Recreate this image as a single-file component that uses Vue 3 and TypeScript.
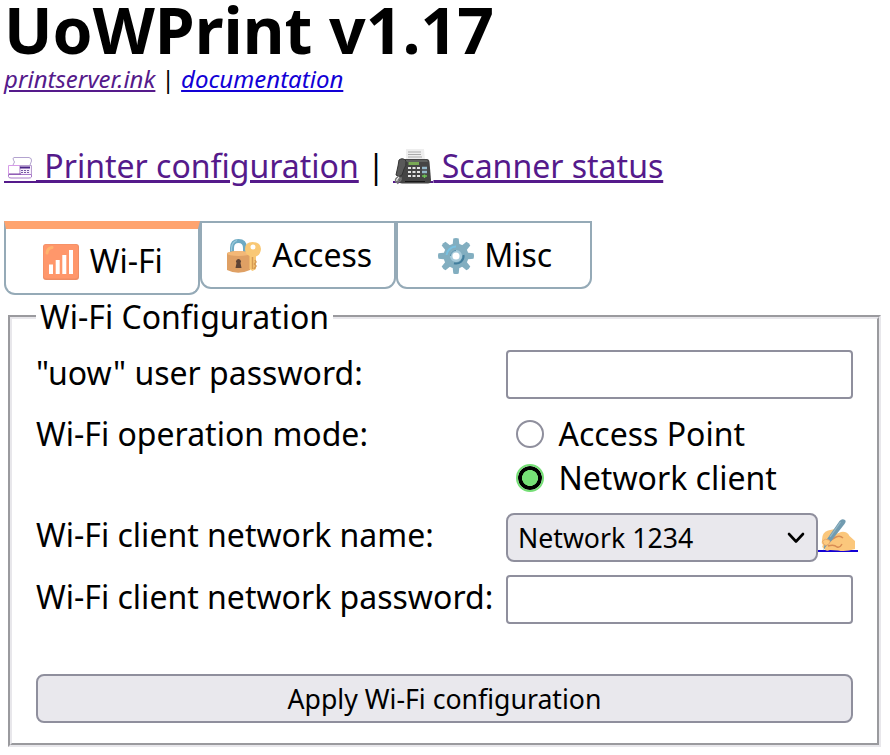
<script setup lang="ts">
import { ref } from 'vue'

type Mode = 'ap' | 'client'

const tabs = ['Wi-Fi', 'Access', 'Misc']
const activeTab = ref(0)
const userPassword = ref('')
const networkPassword = ref('')
const network = ref('Network 1234')
const mode = ref<Mode>('client')
const modes: { id: Mode; label: string }[] = [
  { id: 'ap', label: 'Access Point' },
  { id: 'client', label: 'Network client' },
]
</script>

<template>
  <main class="page">
    <h1>UoWPrint v1.17</h1>
    <div class="sub"><a class="visited" href="#"><i>printserver.ink</i></a> | <a href="#"><i>documentation</i></a></div>

    <nav class="links">
      <a class="visited" href="#"><svg class="emoji printer" viewBox="0 0 32 36">
        <rect x="0" y="33" width="32" height="2" fill="#551a8b" />
        <path d="M9 17 L10.500 14 Q8 10 10 9.500 H25 Q28 10 27.500 13 L26 17" fill="#fff" stroke="#b3a3cf" stroke-width="1" />
        <path d="M4.500 17.500 H16 V26.500 H4.500Z" fill="#fff" stroke="#d79be8" />
        <path d="M16 17.500 H27.500 V26.500 H16Z" fill="#f7edfc" stroke="#b9a0d0" />
        <path d="M4.500 26.500 H27.500 V29 Q27 30 25 30 H7 Q4.500 30 4.500 28.500Z" fill="#fff" stroke="#a878c8" />
        <path d="M5 26 H17" stroke="#7d45a5" />
        <path d="M16 19.500 H26" stroke="#4a2387" stroke-width="2" />
        <path d="M17 22.500 H26 M17 24.500 H26" stroke="#765ca3" stroke-dasharray="2 1" />
      </svg>&nbsp;Printer configuration</a><span class="bar">|</span><a class="visited" href="#"><svg class="emoji" viewBox="0 0 40 36">
        <rect x="0" y="33" width="40" height="2" fill="#551a8b" />
        <path d="M13 1 H31 L32 13 H13Z" fill="#eee" />
        <path d="M15 4 H28 M15 6.500 H28 M15 9 H29" stroke="#aaa" />
        <path d="M12 11 H34 Q36 11 36.500 14 L38 32 Q38 35.500 35 35.500 H9 Q6 35.500 6 32 L8 15 Q9 11 12 11Z" fill="#454545" />
        <path d="M12 12 H34 L35 14 H11Z" fill="#606260" />
        <path d="M15.500 14 H26 V17 H15.500Z" fill="#79a855" />
        <path d="M15 20 H27 M15 24 H27 M15 28 H27" stroke="#e4e4e4" stroke-width="2" stroke-dasharray="3 1.500" />
        <path d="M29 20 H34 M29 24 H34" stroke="#93b8ca" stroke-width="2.500" />
        <path d="M29 28 H34 M31.500 26.500 V30" stroke="#6ec457" stroke-width="1.500" />
        <path d="M12 33.500 H32" stroke="#171717" />
        <path d="M6 12 Q10 9 13 13 Q13.500 18 11 21 L9 27 Q6 30 3 27 L5 18Z" fill="#595959" stroke="#333" />
        <path d="M6 28 Q0 32 4 34.500 Q9 33 8 30 Q4 31 5 36" fill="none" stroke="#777" stroke-width="1.500" />
      </svg>&nbsp;Scanner status</a>
    </nav>

    <div class="tabs">
      <button v-for="(tab, i) in tabs" :key="tab" class="tab" :class="{ active: i === activeTab }" @click="activeTab = i">
        <svg v-if="i === 0" class="emoji" viewBox="0 0 40 36">
          <rect x="2" y="0" width="36" height="36" rx="3" fill="#ee8d65" />
          <rect x="2.500" y="0.500" width="34.500" height="34" rx="3" fill="#ff976b" />
          <path d="M6 9 Q6.500 4 11 3.500" fill="none" stroke="#ffb36f" stroke-width="3" stroke-linecap="round" />
          <path d="M10 30 V20.500 M16.700 30 V16 M23.300 30 V11 M30 30 V6" stroke="#fff" stroke-width="4" />
        </svg>
        <svg v-else-if="i === 1" class="emoji" viewBox="0 0 40 36">
          <path d="M8 16 V10 Q8 3 14.500 3 Q21 3 21 10 V16" fill="none" stroke="#6eaac3" stroke-width="4" />
          <path d="M7.500 13 V10 Q8 4 13 2.500" fill="none" stroke="#9bcbdc" stroke-width="1.200" />
          <path d="M3 15 Q13 11 26 15 V32 Q14 37.500 3 32Z" fill="#dfa064" />
          <ellipse cx="14.500" cy="15.500" rx="11.500" ry="2.500" fill="#f3b877" />
          <path d="M12.500 25 a2.500 2.500 0 1 1 4 0 L17.500 30 H11.500Z" fill="#5e4335" />
          <path fill-rule="evenodd" d="M21 11 Q21 4 28.500 4 Q36.500 4 37 11 Q36.500 17 32 18.500 V31 L28.500 33 L25.500 31 V18 Q21 16 21 11Z M26.500 9 a2.500 2.500 0 1 0 5 0 a2.500 2.500 0 1 0 -5 0" fill="#f9c875" />
          <path d="M28.500 19 V31 M31 22 L32 24 L30.500 26 L32 28 L30 31" fill="none" stroke="#d59a54" stroke-width="1.500" />
        </svg>
        <svg v-else class="emoji" viewBox="0 0 40 36">
          <g fill="#82aec0">
            <path v-for="n in 8" :key="n" d="M16.500 8 L17.300 0.500 Q20 -0.500 22.700 0.500 L23.500 8Z" :transform="`rotate(${n * 45} 20 18)`" />
            <circle cx="20" cy="18" r="12.500" />
          </g>
          <path d="M10.500 17 A9.500 9.500 0 0 1 20 8.500" fill="none" stroke="#78c1e1" stroke-width="2" />
          <path d="M27.500 17 A7.500 7.500 0 0 1 18 25.200" fill="none" stroke="#427e9d" stroke-width="2" />
          <circle cx="20" cy="18" r="4.800" fill="#fff" stroke="#a5cada" stroke-width="2.500" />
          <path d="M14.500 18 A5.500 5.500 0 0 1 20 12.500" fill="none" stroke="#558da9" />
        </svg>
        <span>{{ tab }}</span>
      </button>
    </div>

    <section class="group">
      <div class="inner">
        <div class="legend">Wi-Fi Configuration</div>
        <form @submit.prevent>
          <label class="row first"><span class="name">"uow" user password:</span><input v-model="userPassword" class="field" type="password" /></label>
          <div class="row modes">
            <span class="name">Wi-Fi operation mode:</span>
            <div>
              <label v-for="m in modes" :key="m.id" class="option"><input v-model="mode" type="radio" :value="m.id" />{{ m.label }}</label>
            </div>
          </div>
          <div class="row network">
            <span class="name">Wi-Fi client network name:</span>
            <button type="button" class="select">{{ network }}<svg viewBox="0 0 18 12"><path d="M2 2 L9 9.500 L16 2" fill="none" stroke="#000" stroke-width="2.600" stroke-linecap="round" stroke-linejoin="round" /></svg></button>
            <a class="edit" href="#"><svg class="emoji" viewBox="0 0 40 36">
              <rect x="0" y="34" width="40" height="2" fill="#1200d6" />
              <path d="M4 24 Q4 16 10 14.500 L17 13 Q20 14 18 18 L23 16 Q29 15 31.500 20 L37 25 V33 Q28 36 20 34.500 L12 34 Q8 36 6.500 33 Q3 31 5 29 Q3 27 4 24Z" fill="#fbc77c" />
              <path d="M10 30 Q16 28 19 31 Q22 32 24 28 M11 26 Q14 23 18 21 Q22 19 25 22" fill="none" stroke="#d98d54" stroke-width="1.400" />
              <path d="M5.500 34.500 L7 26 L21.500 5 Q24 2 27 4 Q28.500 5 26.500 8 L12.500 26 L7.500 31Z" fill="#719bb0" />
              <path d="M22.500 6 L12 21" stroke="#93b8c6" stroke-width="1.300" />
              <path d="M4.500 25 Q7 22 11 24 Q13 25 11 28 L8 29.500 Q5 29 4.500 25Z" fill="#fdca80" stroke="#e5a264" stroke-width=".8" />
            </svg></a>
          </div>
          <label class="row last"><span class="name">Wi-Fi client network password:</span><input v-model="networkPassword" class="field" type="password" /></label>
          <button class="apply" type="submit">Apply Wi-Fi configuration</button>
        </form>
      </div>
    </section>
  </main>
</template>

<style>
body { background: #fff; }
</style>

<style scoped>
* { box-sizing: border-box; }
.page { width: 890px; height: 755px; overflow: hidden; font: 32px/44px "Noto Sans", sans-serif; color: #000; white-space: nowrap; }
h1 { margin: 0; padding-left: 4px; height: 63px; font-size: 64.25px; line-height: 59px; font-weight: 700; }
.sub { height: 34px; padding-left: 4px; font-size: 24px; line-height: 32px; }
a { color: #1200d6; text-decoration: underline; }
a.visited { color: #551a8b; }
.links { height: 44px; margin-top: 47px; padding-left: 4px; }
.bar { margin: 0 8.5px; }
.emoji { display: inline-block; width: 40px; height: 36px; flex: none; overflow: visible; vertical-align: -6px; }
.emoji.printer { width: 32px; }
.tabs { display: flex; align-items: flex-start; height: 74px; margin: 33px 0 0 4px; }
.tab { display: flex; align-items: center; justify-content: center; gap: 8.5px; width: 196px; height: 68px; padding: 0; background: #fff; border: 2px solid #95aab7; border-radius: 0 0 11px 11px; font: inherit; color: #000; }
.tab .emoji { margin-top: 2px; }
.tab.active { height: 74px; border-top: 8px solid #ffa46f; }
.group { width: 873px; height: 432px; margin: 20px 0 0 8px; border: 2px solid; border-color: #9a9a9e #e8e7eb #e8e7eb #9a9a9e; }
.inner { height: 428px; border: 2px solid; border-color: #e8e7eb #9a9a9e #9a9a9e #e8e7eb; }
.legend { position: relative; width: 297px; height: 44px; margin: -24px 0 0 24px; padding-left: 4px; background: #fff; }
form { padding-left: 24px; }
.row { display: flex; align-items: center; height: 49px; }
.name { width: 470px; flex: none; padding-bottom: 6px; }
.first { margin-top: 11px; }
.first .name { padding-bottom: 4px; }
.field { width: 347px; height: 49px; padding: 4px; border: 2px solid #8f8f9d; border-radius: 4px; background: #fff; font: inherit; outline: none; }
.modes { height: 88px; margin-top: 13px; align-items: flex-start; }
.option { display: flex; align-items: center; height: 44px; padding-left: 10px; }
.option input { appearance: none; width: 28px; height: 28px; margin: 0 14.5px 0 0; border: 2px solid #8f8f9d; border-radius: 50%; background: #fff; }
.option input:checked { border-color: #75df76; background: radial-gradient(circle, #75df76 0 7.700px, #000 8.300px); background-clip: padding-box; }
.network { margin-top: 13px; }
.select { display: flex; align-items: center; justify-content: space-between; width: 312px; height: 49px; padding: 0 11px 0 10px; border: 2px solid #8f8f9d; border-radius: 8px; background: #e9e8ed; font: 26.667px/36px "Noto Sans", sans-serif; color: #000; }
.select svg { width: 18px; height: 12px; }
.edit { align-self: flex-start; width: 40px; height: 36px; margin-top: 3px; }
.edit .emoji { display: block; }
.last { margin-top: 13px; }
.apply { display: block; width: 817px; height: 49px; margin-top: 50px; padding: 0; border: 2px solid #8f8f9d; border-radius: 8px; background: #e9e8ed; font: 26.667px/36px "Noto Sans", sans-serif; color: #000; }
</style>
